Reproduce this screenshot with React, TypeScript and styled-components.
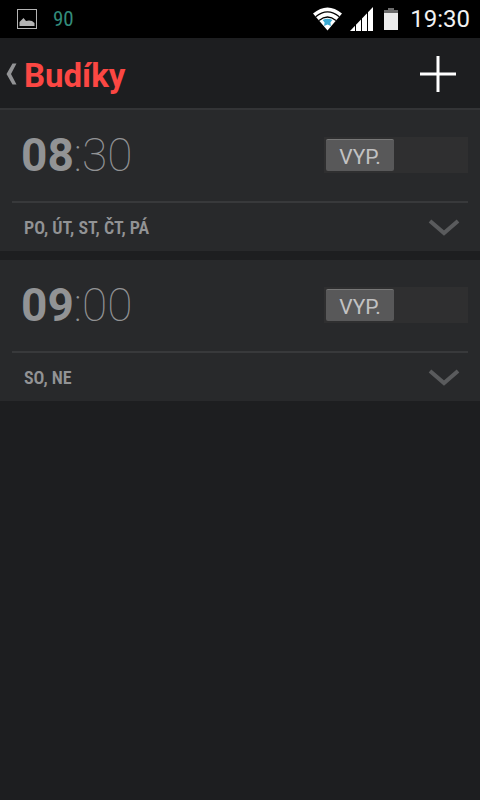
import React, { useState } from "react";
import styled, { createGlobalStyle } from "styled-components";

const GlobalStyle = createGlobalStyle`
  * { box-sizing: border-box; }
  html { background: #1d1e20; }
  body {
    margin: 0;
    font-family: Roboto, "Noto Sans", sans-serif;
    color: #929395;
  }
  button { border: 0; padding: 0; background: none; font: inherit; color: inherit; cursor: pointer; }
  svg { display: block; }
`;

const Screen = styled.div`
  min-height: 100vh;
  background: #1d1e20;
`;

const StatusBar = styled.div`
  display: flex;
  align-items: center;
  justify-content: space-between;
  height: 38px;
  padding: 0 10px 0 16px;
  background: #000;
`;

const StatusGroup = styled.div<{ $gap: number }>`
  display: flex;
  align-items: center;
  gap: ${(p) => p.$gap}px;
`;

const BatteryLevel = styled.span`
  font-family: "Roboto Condensed", Roboto, sans-serif;
  font-size: 21px;
  line-height: 24px;
  font-weight: 400;
  color: #338c7b;
`;

const Clock = styled.span`
  font-size: 24px;
  line-height: 28px;
  color: #f2f2f2;
`;

const AppBar = styled.header`
  display: flex;
  align-items: center;
  justify-content: space-between;
  height: 72px;
  padding: 2px 24px 0 6px;
  border-bottom: 2px solid #333436;
`;

const BackButton = styled.button`
  display: flex;
  align-items: center;
  gap: 7px;
`;

const Title = styled.h1`
  margin: 0;
  padding-top: 4px;
  font-size: 33px;
  line-height: 40px;
  font-weight: 700;
  color: #fb4743;
`;

const AddButton = styled.button`
  display: flex;
`;

const AlarmList = styled.ul`
  display: flex;
  flex-direction: column;
  gap: 9px;
  margin: 0;
  padding: 0;
  list-style: none;
`;

const AlarmCard = styled.li`
  padding: 0 12px;
  background: #28292b;
`;

const TimeRow = styled.div`
  display: flex;
  align-items: center;
  justify-content: space-between;
  height: 93px;
  padding: 0 0 2px 9px;
  border-bottom: 2px solid #38393b;
`;

const Time = styled.time`
  font-size: 46px;
  line-height: 54px;
  font-weight: 100;
`;

const Hours = styled.span`
  font-weight: 700;
`;

const Track = styled.label`
  display: flex;
  width: 144px;
  height: 36px;
  padding: 2px;
  background: #2f2f30;
  cursor: pointer;

  &:has(input:checked) { justify-content: flex-end; }
`;

const SwitchInput = styled.input`
  position: absolute;
  opacity: 0;
  pointer-events: none;
`;

const Thumb = styled.span`
  display: flex;
  align-items: center;
  justify-content: center;
  width: 68px;
  height: 32px;
  padding-top: 3px;
  border-top: 1px solid #777;
  border-radius: 2px;
  background: #585859;
  font-size: 21px;
  line-height: 24px;
  color: #c2c2c3;
`;

const DetailRow = styled.div`
  display: flex;
  align-items: center;
  justify-content: space-between;
  height: 48px;
  padding: 1px 8px 0 12px;
`;

const Days = styled.span`
  font-family: "Roboto Condensed", Roboto, sans-serif;
  font-size: 18px;
  line-height: 24px;
  font-weight: 600;
`;

const ExpandButton = styled.button`
  display: flex;
`;

const PictureIcon = () => (
  <svg width="21" height="20" viewBox="0 0 21 20" aria-hidden="true">
    <rect x="1.5" y="0.5" width="19" height="19" fill="none" stroke="#b4b4b4" />
    <path d="M3.5 17V13L5 11.500L7.500 9L10 12L13 11.500L16 12L18.500 14V17Z" fill="#b4b4b4" />
  </svg>
);

const WifiIcon = () => (
  <svg width="29" height="24" viewBox="0 0 30 24" preserveAspectRatio="none" aria-hidden="true">
    <path d="M0 6.500Q15-5.500 30 6.500L15 23.500Z" fill="#fff" />
    <path d="M2.800 9.800Q15 0 27.200 9.800M6.200 13.500Q15 6.500 23.800 13.500" fill="none" stroke="#000" strokeWidth="1.300" />
    <path d="M10 13Q15 10.500 20 13L18 15.500L18.500 19L15 17.500L11.500 19L12 15.500Z" fill="#39a9d2" />
  </svg>
);

const SignalIcon = () => (
  <svg width="23" height="24" viewBox="0 0 23 24" aria-hidden="true">
    <path d="M0 24L23 0V24Z" fill="#fff" />
    <path d="M5.500 0V24M11.500 0V24M17.500 0V24" stroke="#000" />
  </svg>
);

const BatteryIcon = () => (
  <svg width="21" height="24" viewBox="0 0 21 24" aria-hidden="true">
    <path d="M7 1H13V3H17V6H3V3H7Z" fill="#6d6d6d" />
    <path d="M3 6H17V23H3Z" fill="#ececec" />
  </svg>
);

const BackIcon = () => (
  <svg width="11" height="22" viewBox="0 0 11 22" aria-hidden="true">
    <path d="M6.500 0.500H10.500L5 11L10.500 21.500H6.500L0.500 11Z" fill="#929395" />
  </svg>
);

const PlusIcon = () => (
  <svg width="36" height="36" viewBox="0 0 36 36" aria-hidden="true">
    <path d="M18 0V36M0 18H36" stroke="#fff" strokeWidth="3" />
  </svg>
);

const ChevronIcon = () => (
  <svg width="32" height="18" viewBox="0 0 32 18" aria-hidden="true">
    <path d="M2 2L16 14L30 2" fill="none" stroke="#5a5b5d" strokeWidth="4" />
  </svg>
);

const alarms = [
  { hours: "08", minutes: "30", days: "PO, ÚT, ST, ČT, PÁ" },
  { hours: "09", minutes: "00", days: "SO, NE" },
];

function Alarm({ hours, minutes, days }: { hours: string; minutes: string; days: string }) {
  const [on, setOn] = useState(false);
  return (
    <AlarmCard>
      <TimeRow>
        <Time dateTime={`${hours}:${minutes}`}>
          <Hours>{hours}</Hours>:{minutes}
        </Time>
        <Track>
          <SwitchInput type="checkbox" role="switch" checked={on} onChange={() => setOn(!on)} />
          <Thumb>{on ? "ZAP." : "VYP."}</Thumb>
        </Track>
      </TimeRow>
      <DetailRow>
        <Days>{days}</Days>
        <ExpandButton type="button" aria-label="Rozbalit">
          <ChevronIcon />
        </ExpandButton>
      </DetailRow>
    </AlarmCard>
  );
}

export default function App() {
  return (
    <Screen lang="cs">
      <GlobalStyle />
      <StatusBar>
        <StatusGroup $gap={16}>
          <PictureIcon />
          <BatteryLevel>90</BatteryLevel>
        </StatusGroup>
        <StatusGroup $gap={8}>
          <WifiIcon />
          <SignalIcon />
          <BatteryIcon />
          <Clock>19:30</Clock>
        </StatusGroup>
      </StatusBar>
      <AppBar>
        <BackButton type="button">
          <BackIcon />
          <Title>Budíky</Title>
        </BackButton>
        <AddButton type="button" aria-label="Přidat budík">
          <PlusIcon />
        </AddButton>
      </AppBar>
      <AlarmList>
        {alarms.map((a) => (
          <Alarm key={a.hours} {...a} />
        ))}
      </AlarmList>
    </Screen>
  );
}
